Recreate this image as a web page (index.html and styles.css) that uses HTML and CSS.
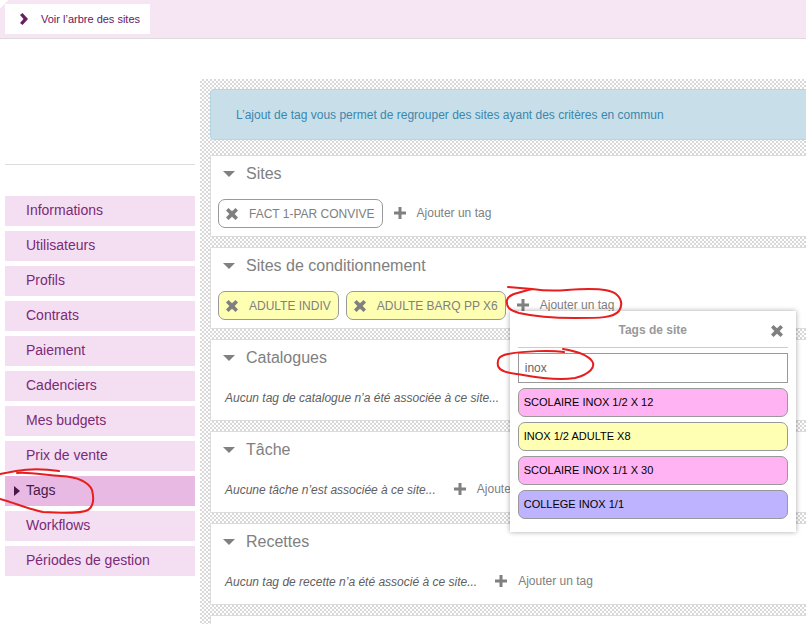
FILE: index.html
```html
<!DOCTYPE html>
<html lang="fr">
<head>
  <meta charset="UTF-8" />
  <meta name="viewport" content="width=device-width, initial-scale=1.0" />
  <title>Tags</title>
  <link rel="stylesheet" href="styles.css">
</head>
<body>
  <!-- Shared icons -->
  <svg class="sprite" aria-hidden="true">
    <symbol id="cross" viewBox="0 0 12 12">
      <path d="M2.500 0 6 3.300 9.500 0 12 2.500 8.700 6 12 9.500 9.500 12 6 8.700 2.500 12 0 9.500 3.300 6 0 2.500z" />
    </symbol>
    <symbol id="plus" viewBox="0 0 12 12">
      <path d="M4.500 0h3v4.500H12v3H7.500V12h-3V7.500H0v-3h4.500z" />
    </symbol>
    <symbol id="caret" viewBox="0 0 12 6">
      <path d="M0 0h12L6 6z" />
    </symbol>
    <symbol id="chevron" viewBox="0 0 8 12">
      <path d="M2.500 0 8 6 2.500 12 0 10 3.500 6 0 2z" />
    </symbol>
  </svg>

  <header class="topbar">
    <button class="tree-btn" type="button">
      <svg class="icon-chevron"><use href="#chevron" /></svg>
      Voir l’arbre des sites
    </button>
  </header>

  <div class="layout">
    <!-- Side menu -->
    <nav class="sidebar">
      <ul>
        <li><a href="#">Informations</a></li>
        <li><a href="#">Utilisateurs</a></li>
        <li><a href="#">Profils</a></li>
        <li><a href="#">Contrats</a></li>
        <li><a href="#">Paiement</a></li>
        <li><a href="#">Cadenciers</a></li>
        <li><a href="#">Mes budgets</a></li>
        <li><a href="#">Prix de vente</a></li>
        <li><a href="#" class="active">Tags</a></li>
        <li><a href="#">Workflows</a></li>
        <li><a href="#">Périodes de gestion</a></li>
      </ul>
    </nav>

    <main class="content">
      <div class="alert">L’ajout de tag vous permet de regrouper des sites ayant des critères en commun</div>

      <section class="card">
        <h2><button type="button"><svg class="icon-caret"><use href="#caret" /></svg>Sites</button></h2>
        <div class="row">
          <button class="chip" type="button"><svg class="icon"><use href="#cross" /></svg>FACT 1-PAR CONVIVE</button>
          <div class="add-wrap">
            <button class="add" type="button"><svg class="icon"><use href="#plus" /></svg>Ajouter un tag</button>
          </div>
        </div>
      </section>

      <section class="card">
        <h2><button type="button"><svg class="icon-caret"><use href="#caret" /></svg>Sites de conditionnement</button></h2>
        <div class="row">
          <button class="chip yellow" type="button"><svg class="icon"><use href="#cross" /></svg>ADULTE INDIV</button>
          <button class="chip yellow" type="button"><svg class="icon"><use href="#cross" /></svg>ADULTE BARQ PP X6</button>
          <div class="add-wrap">
            <button class="add" type="button"><svg class="icon"><use href="#plus" /></svg>Ajouter un tag</button>
            <!-- Tag picker -->
            <div class="popover">
              <div class="popover-head">
                <label for="tagSearch">Tags de site</label>
                <button class="close" type="button" aria-label="Fermer"><svg class="icon"><use href="#cross" /></svg></button>
              </div>
              <input id="tagSearch" type="text" value="inox" />
              <button class="option pink" type="button">SCOLAIRE INOX 1/2 X 12</button>
              <button class="option yellow" type="button">INOX 1/2 ADULTE X8</button>
              <button class="option pink" type="button">SCOLAIRE INOX 1/1 X 30</button>
              <button class="option violet" type="button">COLLEGE INOX 1/1</button>
            </div>
          </div>
        </div>
      </section>

      <section class="card">
        <h2><button type="button"><svg class="icon-caret"><use href="#caret" /></svg>Catalogues</button></h2>
        <div class="row">
          <p class="empty">Aucun tag de catalogue n’a été associée à ce site...</p>
        </div>
      </section>

      <section class="card">
        <h2><button type="button"><svg class="icon-caret"><use href="#caret" /></svg>Tâche</button></h2>
        <div class="row">
          <p class="empty">Aucune tâche n’est associée à ce site...</p>
          <div class="add-wrap">
            <button class="add" type="button"><svg class="icon"><use href="#plus" /></svg>Ajouter un tag</button>
          </div>
        </div>
      </section>

      <section class="card">
        <h2><button type="button"><svg class="icon-caret"><use href="#caret" /></svg>Recettes</button></h2>
        <div class="row">
          <p class="empty">Aucun tag de recette n’a été associé à ce site...</p>
          <div class="add-wrap">
            <button class="add" type="button"><svg class="icon"><use href="#plus" /></svg>Ajouter un tag</button>
          </div>
        </div>
      </section>

      <section class="card"></section>
    </main>
  </div>

  <!-- Hand-drawn red marks -->
  <svg class="marks" width="806" height="624" aria-hidden="true">
    <path d="M508 287L532 289C545 291 556 291 567 290C590 288 610 289 616 294C623 300 622 306 619 311C613 318 600 318 575 318C550 318 532 316 519 313C509 310 506 307 507 300C509 294 517 293 532 289" />
    <path d="M564 352C550 350 525 351 508 354C498 356 497 360 498 366C501 373 512 373 523 375C545 379 562 380 575 378C590 374 596 367 592 361C587 354 575 351 563 349" />
    <path d="M59 471C45 469 28 469 16 471L0 474M17 473C30 472 45 475 61 476C77 477 88 481 92 490C94 498 94 506 88 510C80 514 60 513 43 512C28 509 15 503 0 499" />
  </svg>
</body>
</html>
```
FILE: styles.css
```css
:root {
  --purple: #7b2a78;
  --grey: #808080;
  --line: #dcdcdc;
  --yellow: #ffffb3;
}
* {
  margin: 0;
  padding: 0;
  box-sizing: border-box;
  font-family: "Liberation Sans", Arial, sans-serif;
}
body {
  position: relative;
  height: 100vh;
  display: flex;
  flex-direction: column;
  overflow: hidden;
  background: #fff;
  color: var(--grey);
  font-size: 12px;
}
button {
  border: none;
  background: none;
  color: inherit;
  cursor: pointer;
}
.sprite {
  display: none;
}
.icon {
  width: 12px;
  height: 12px;
  flex: none;
  fill: var(--grey);
}
.icon-caret {
  width: 12px;
  height: 6px;
  fill: var(--grey);
}
.icon-chevron {
  width: 8px;
  height: 12px;
  fill: #64205f;
}
/* Top bar, with its clipped corner */
.topbar {
  flex: none;
  padding: 4px 5px;
  border-bottom: 1px solid var(--line);
  background: linear-gradient(135deg, #fff 6px, #f6e6f4 6px);
}
.tree-btn {
  display: flex;
  align-items: center;
  gap: 13px;
  height: 30px;
  padding: 0 10px 0 15px;
  background: #fff;
  color: #64205f;
  font-size: 11px;
}
.layout {
  flex: 1;
  display: flex;
  gap: 5px;
  padding: 40px 0 0 5px;
}
/* Side menu */
.sidebar {
  flex: none;
  width: 190px;
  padding-top: 85px;
}
.sidebar ul {
  display: flex;
  flex-direction: column;
  gap: 5px;
  padding-top: 31px;
  border-top: 1px solid var(--line);
  list-style: none;
}
.sidebar a {
  position: relative;
  display: block;
  height: 30px;
  padding-left: 21px;
  background: #f3dff1;
  color: var(--purple);
  font-size: 14px;
  line-height: 29px;
  text-decoration: none;
}
.sidebar a.active {
  background: #e7b9e3;
  color: #4a1848;
}
.sidebar a.active::before {
  content: "";
  position: absolute;
  left: 9px;
  top: 10px;
  border: solid transparent;
  border-width: 5px 0 5px 6px;
  border-left-color: #4a1848;
}
/* Main area runs off the right edge of the window */
.content {
  flex: 1;
  display: flex;
  flex-direction: column;
  gap: 10px;
  margin-right: -20px;
  padding: 10px;
  background: repeating-conic-gradient(#d8d8d8 0 25%, #fff 0 50%) 0 0 / 4px 4px;
}
.alert {
  margin-bottom: 5px;
  padding: 2px 25px 0;
  border: 1px solid #b5d5e5;
  border-radius: 4px;
  background: #c8dfea;
  color: #3a87ad;
  line-height: 47px;
}
.card {
  padding: 0 7px 8px;
  border: 1px solid var(--line);
  background: #fff;
}
.card h2 {
  margin-bottom: 7px;
  font-size: 16px;
  font-weight: normal;
}
.card h2 button {
  display: flex;
  align-items: center;
  gap: 11px;
  height: 36px;
  padding-left: 5px;
  font-size: 16px;
}
.row {
  display: flex;
  align-items: center;
  gap: 7px;
  min-height: 29px;
}
.chip {
  display: flex;
  align-items: center;
  gap: 11px;
  height: 29px;
  padding: 0 7px;
  border: 1px solid #999;
  border-radius: 7px;
  font-size: 12px;
}
.empty {
  padding: 1px 7px 0;
  color: #606060;
  font-style: italic;
}
.add-wrap {
  position: relative;
  padding-bottom: 2px;
}
.add {
  display: flex;
  align-items: center;
  gap: 11px;
  height: 16px;
  padding-left: 4px;
  font-size: 12px;
}
.yellow {
  background: var(--yellow);
}
.pink {
  background: #ffb3f3;
}
.violet {
  background: #bdb3ff;
}
/* Tag picker */
.popover {
  position: absolute;
  top: 14px;
  left: -3px;
  z-index: 5;
  display: flex;
  flex-direction: column;
  gap: 5px;
  width: 286px;
  padding: 1px 8px 13px;
  background: #fff;
  box-shadow: 0 0 5px rgba(0, 0, 0, 0.35);
}
.popover-head {
  display: flex;
  align-items: center;
  height: 36px;
  padding-top: 1px;
  border-bottom: 1px solid #ccc;
  color: #999;
  font-weight: bold;
}
.popover-head label {
  flex: 1;
  text-align: center;
}
.close {
  display: flex;
  margin-left: -17px;
  padding: 2px 5px 0 0;
}
.popover input {
  height: 30px;
  padding: 0 6px;
  border: 1px solid #999;
  outline: none;
  color: #666;
  font-size: 12px;
}
.option {
  height: 29px;
  padding: 0 5px;
  border: 1px solid #999;
  border-radius: 7px;
  color: #000;
  font-size: 11px;
  text-align: left;
}
/* Red marks lie over the whole page */
.marks {
  position: absolute;
  top: 0;
  left: 0;
  z-index: 10;
  fill: none;
  stroke: #e61e1e;
  stroke-width: 2;
  stroke-linecap: round;
  pointer-events: none;
}
```
